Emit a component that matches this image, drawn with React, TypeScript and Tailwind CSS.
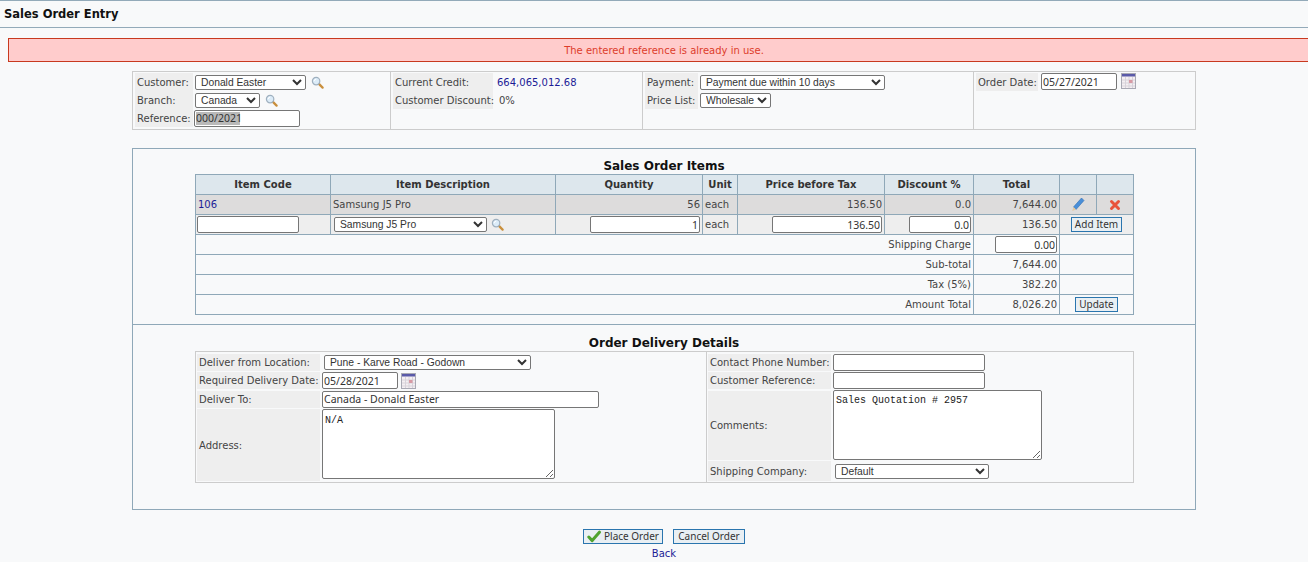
const line = "border border-[#8fa8b8]";
const controlFont = "font-['Noto_Sans',sans-serif]";
const selectFont = "font-['Liberation_Sans',sans-serif]";

function SearchIcon() {
  return (
    <svg width="13" height="13" viewBox="0 0 14 14" className="inline-block shrink-0">
      <path d="M8.5 8.5L12.5 12.5" stroke="#c98f3c" strokeWidth="2.4" strokeLinecap="round" />
      <circle cx="5.5" cy="5.5" r="4" fill="#dcecf8" stroke="#9fb0bf" strokeWidth="1.3" />
      <path d="M3.5 5.5a2 2 0 0 1 2-2" fill="none" stroke="#fff" strokeWidth="1" />
    </svg>
  );
}

function CalendarIcon() {
  return (
    <svg width="15" height="16" viewBox="0 0 15 16" className="inline-block shrink-0">
      <rect x="0.5" y="0.5" width="14" height="15" fill="#f4eff2" stroke="#a9a9b4" />
      <rect x="1" y="1" width="13" height="2.5" fill="#5a5aa8" />
      <path d="M1 7h13M1 10h13M1 13h13M4.5 4v11M8 4v11M11.5 4v11" stroke="#d8d3da" strokeWidth="1" />
      <rect x="8" y="7" width="3.5" height="3" fill="#d89aa4" />
    </svg>
  );
}

function PencilIcon() {
  return (
    <svg width="14" height="15" viewBox="0 0 14 15">
      <path d="M10.5 1L13 3.5L5 12.5L2.5 10Z" fill="#4a8fd8" stroke="#2f6fb5" strokeWidth="0.6" />
      <path d="M2.5 10L5 12.5L1.2 14Z" fill="#e3c9a0" />
    </svg>
  );
}

function CrossIcon() {
  return (
    <svg width="12" height="12" viewBox="0 0 12 12">
      <path d="M2.5 2.5L9.5 9.5M9.5 2.5L2.5 9.5" stroke="#e8533c" strokeWidth="3" strokeLinecap="round" />
    </svg>
  );
}

function CheckIcon() {
  return (
    <svg width="14" height="13" viewBox="0 0 14 13">
      <path d="M1.8 7L5.2 10.6L12.4 2.2" fill="none" stroke="#4fa32e" strokeWidth="3" strokeLinecap="round" strokeLinejoin="round" />
    </svg>
  );
}

function Select({ value, className = "" }: { value: string; className?: string }) {
  return (
    <select
      defaultValue={value}
      className={`h-[15px] rounded-[2px] border border-[#767676] bg-white pl-[1px] ${selectFont} text-[10.3px] leading-[13px] text-[#333] ${className}`}
    >
      <option>{value}</option>
    </select>
  );
}

function Input({ value = "", className = "" }: { value?: string; className?: string }) {
  return (
    <input
      readOnly
      value={value}
      className={`h-[17px] rounded-[2px] border border-[#767676] bg-white px-[1px] ${controlFont} text-[10.5px] text-[#333] ${className}`}
    />
  );
}

function Button({ children, className = "" }: { children: React.ReactNode; className?: string }) {
  return (
    <button className={`inline-flex h-[15px] items-center justify-center gap-[3px] border border-[#2a75ae] bg-[#e9eff3] ${controlFont} text-[10px] text-[#333] ${className}`}>
      {children}
    </button>
  );
}

const headers = ["Item Code", "Item Description", "Quantity", "Unit", "Price before Tax", "Discount %", "Total", "", ""];

function ItemsTable() {
  const th = `${line} bg-[#dde7ed] p-0 text-center font-bold text-[#333]`;
  const td = `${line} px-[2px] py-0`;
  const totals = [
    { label: "Sub-total", value: "7,644.00" },
    { label: "Tax (5%)", value: "382.20" },
  ];

  return (
    <table className="ml-[62px] w-[938px] table-fixed border-collapse">
      <colgroup>
        <col className="w-[135px]" />
        <col className="w-[225px]" />
        <col className="w-[147px]" />
        <col className="w-[35px]" />
        <col className="w-[147px]" />
        <col className="w-[89px]" />
        <col className="w-[86px]" />
        <col className="w-[37px]" />
        <col className="w-[37px]" />
      </colgroup>
      <thead>
        <tr className="h-5">
          {headers.map((h, i) => (
            <th key={i} className={th}>{h}</th>
          ))}
        </tr>
      </thead>
      <tbody>
        <tr className="h-5 bg-[#dddcdc]">
          <td className={`${td} text-[#1c1c96]`}>106</td>
          <td className={td}>Samsung J5 Pro</td>
          <td className={`${td} text-right`}>56</td>
          <td className={td}>each</td>
          <td className={`${td} text-right`}>136.50</td>
          <td className={`${td} text-right`}>0.0</td>
          <td className={`${td} text-right`}>7,644.00</td>
          <td className={`${td} text-center`}><span className="inline-flex align-middle"><PencilIcon /></span></td>
          <td className={`${td} text-center`}><span className="inline-flex align-middle"><CrossIcon /></span></td>
        </tr>
        <tr className="h-5 bg-[#eeeeee]">
          <td className={`${line} p-0 pl-[1px]`}><Input className="block w-[102px]" /></td>
          <td className={td}>
            <div className="flex items-center gap-[4px] pl-[1px]">
              <Select value="Samsung J5 Pro" className="w-[153px]" />
              <SearchIcon />
            </div>
          </td>
          <td className={`${td} text-right`}><Input value="1" className="w-[110px] text-right align-middle" /></td>
          <td className={td}>each</td>
          <td className={`${td} text-right`}><Input value="136.50" className="w-[110px] text-right align-middle" /></td>
          <td className={`${td} text-right`}><Input value="0.0" className="w-[62px] text-right align-middle" /></td>
          <td className={`${td} text-right`}>136.50</td>
          <td colSpan={2} className={`${td} text-center`}>
            <Button className="w-[51px] align-middle">Add Item</Button>
          </td>
        </tr>
        <tr className="h-5">
          <td colSpan={6} className={`${td} text-right`}>Shipping Charge</td>
          <td className={`${td} text-right`}><Input value="0.00" className="w-[62px] text-right align-middle" /></td>
          <td colSpan={2} className={td} />
        </tr>
        {totals.map((row) => (
          <tr key={row.label} className="h-5">
            <td colSpan={6} className={`${td} text-right`}>{row.label}</td>
            <td className={`${td} text-right`}>{row.value}</td>
            <td colSpan={2} className={td} />
          </tr>
        ))}
        <tr className="h-5">
          <td colSpan={6} className={`${td} text-right`}>Amount Total</td>
          <td className={`${td} text-right`}>8,026.20</td>
          <td colSpan={2} className={`${td} text-center`}>
            <Button className="w-[43px] align-middle">Update</Button>
          </td>
        </tr>
      </tbody>
    </table>
  );
}

function Label({ children, className = "" }: { children: React.ReactNode; className?: string }) {
  return <div className={`flex items-center whitespace-nowrap bg-[#eeeeee] pl-[2px] ${className}`}>{children}</div>;
}

function DeliveryTable() {
  return (
    <div className="ml-[62px] flex h-[132px] w-[939px] border border-[#cccccc]">
      <div className="grid w-[511px] grid-cols-[123px_1fr] grid-rows-[17px_17px_17px_72px] gap-x-[2px] gap-y-[1.5px] border-r border-[#cccccc] px-[1px] py-[1.5px]">
        <Label>Deliver from Location:</Label>
        <div className="flex items-center pl-[2px]"><Select value="Pune - Karve Road - Godown" className="w-[207px]" /></div>
        <Label>Required Delivery Date:</Label>
        <div className="flex items-center gap-[3px]"><Input value="05/28/2021" className="w-[76px]" /><CalendarIcon /></div>
        <Label>Deliver To:</Label>
        <div className="flex items-center"><Input value="Canada - Donald Easter" className="w-[277px]" /></div>
        <Label>Address:</Label>
        <div>
          <textarea readOnly value="N/A" className="block h-[70px] w-[233px] rounded-[2px] border border-[#767676] bg-white px-[2px] pt-[4px] font-['Liberation_Mono',monospace] text-[10px] leading-[13px] text-[#222]" />
        </div>
      </div>
      <div className="grid flex-1 grid-cols-[123px_1fr] grid-rows-[17px_17px_69px_20px] gap-x-[2px] gap-y-[1.5px] px-[1px] py-[1.5px]">
        <Label>Contact Phone Number:</Label>
        <div className="flex items-center"><Input className="w-[152px]" /></div>
        <Label>Customer Reference:</Label>
        <div className="flex items-center"><Input className="w-[152px]" /></div>
        <Label>Comments:</Label>
        <div>
          <textarea readOnly value="Sales Quotation # 2957" className="-mt-[1px] block h-[70px] w-[209px] rounded-[2px] border border-[#767676] bg-white px-[2px] pt-[3px] font-['Liberation_Mono',monospace] text-[10px] leading-[13px] text-[#222]" />
        </div>
        <Label>Shipping Company:</Label>
        <div className="flex items-center pl-[2px]"><Select value="Default" className="w-[154px]" /></div>
      </div>
    </div>
  );
}

function OrderHeader() {
  return (
    <div className="mx-auto flex h-[59px] w-[1064px] border border-[#cccccc]">
      <div className="grid w-[258px] grid-cols-[58px_1fr] grid-rows-[18px_18px_18px] content-start gap-x-[2px] border-r border-[#cccccc] pl-[2px] pt-[1px]">
        <Label>Customer:</Label>
        <div className="flex items-center gap-[5px]"><Select value="Donald Easter" className="w-[111px]" /><SearchIcon /></div>
        <Label>Branch:</Label>
        <div className="flex items-center gap-[5px]"><Select value="Canada" className="w-[65px]" /><SearchIcon /></div>
        <Label>Reference:</Label>
        <div className="-ml-[1px] flex items-center">
          <input
            readOnly
            value="000/2021"
            className={`h-[17px] w-[106px] rounded-[2px] border border-[#767676] bg-white bg-[linear-gradient(#b9b9b9,#b9b9b9)] bg-[length:44px_13px] bg-[position:1px_1px] bg-no-repeat px-[1px] ${controlFont} text-[10.5px] text-[#333]`}
          />
        </div>
      </div>
      <div className="grid w-[252px] grid-cols-[100px_1fr] grid-rows-[18px_18px] content-start gap-x-[2px] border-r border-[#cccccc] pl-[2px] pt-[1px]">
        <Label>Current Credit:</Label>
        <div className="flex items-center pl-[2px] text-[#1c1c96]">664,065,012.68</div>
        <Label>Customer Discount:</Label>
        <div className="flex items-center pl-[4px]">0%</div>
      </div>
      <div className="grid w-[331px] grid-cols-[53px_1fr] grid-rows-[18px_18px] content-start gap-x-[2px] border-r border-[#cccccc] pl-[2px] pt-[1px]">
        <Label>Payment:</Label>
        <div className="flex items-center"><Select value="Payment due within 10 days" className="w-[185px]" /></div>
        <Label>Price List:</Label>
        <div className="flex items-center"><Select value="Wholesale" className="w-[71px]" /></div>
      </div>
      <div className="flex flex-1 items-start gap-[3px] pl-[2px] pt-[1px]">
        <Label className="h-[18px] w-[62px]">Order Date:</Label>
        <Input value="05/27/2021" className="w-[76px]" />
        <span className="ml-[1px]"><CalendarIcon /></span>
      </div>
    </div>
  );
}

export default function App() {
  return (
    <div className="h-[562px] w-full overflow-hidden bg-[#f8f9fa] font-['DejaVu_Sans',sans-serif] text-[10px] leading-[13px] text-[#444]">
      <div className="w-[1328px]">
        <div className="flex h-[28px] items-center border-y border-[#93aab9] pl-[4px] text-[11.5px] font-bold text-[#111]">
          Sales Order Entry
        </div>

        <div className="mx-[8px] mt-[10px] flex h-[24px] items-center justify-center border border-[#c8391f] bg-[#ffcccc] text-[#dd3c2a]">
          The entered reference is already in use.
        </div>

        <div className="mt-[9px]">
          <OrderHeader />
        </div>

        <div className="mx-auto mt-[18px] w-[1064px] border border-[#8fa8b8]">
          <div className="pb-[9px] pt-[9px]">
            <div className="h-[16px] text-center text-[12px] font-bold leading-[16px] text-[#111]">Sales Order Items</div>
            <ItemsTable />
          </div>
          <div className="border-t border-[#8fa8b8] pb-[26px] pt-[10px]">
            <div className="h-[16px] text-center text-[12px] font-bold leading-[16px] text-[#111]">Order Delivery Details</div>
            <DeliveryTable />
          </div>
        </div>

        <div className="mt-[19px] flex justify-center gap-[10px]">
          <Button className="w-[80px]"><CheckIcon />Place Order</Button>
          <Button className="w-[72px]">Cancel Order</Button>
        </div>
        <div className="mt-[3px] text-center text-[#1c1c96]">Back</div>
      </div>
    </div>
  );
}
